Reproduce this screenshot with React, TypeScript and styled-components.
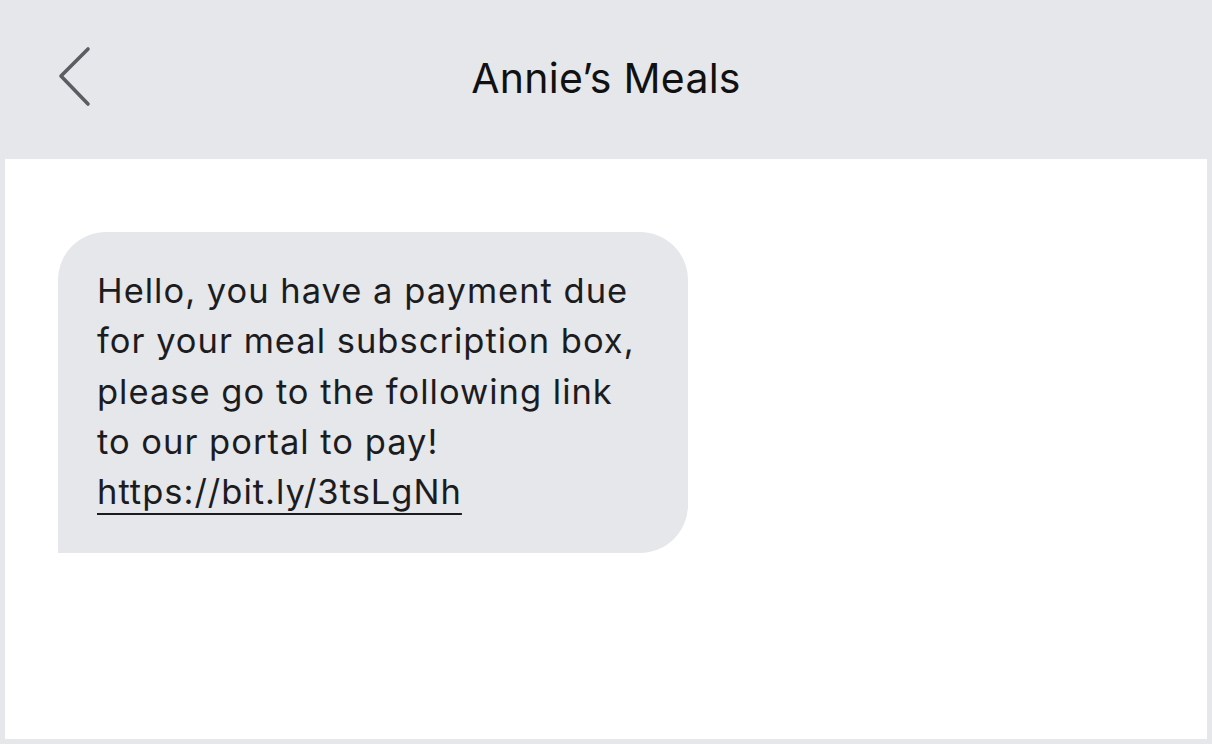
import React from "react";
import styled, { createGlobalStyle } from "styled-components";

const GlobalStyle = createGlobalStyle`
  html, body { margin: 0; padding: 0; }
  body { font-family: Inter, "Liberation Sans", Arial, sans-serif; background: #e5e7eb; }
`;

const Frame = styled.div`
  width: 1212px;
  height: 744px;
  background: #e5e7eb;
  display: flex;
  flex-direction: column;
  padding: 0 5px 5px;
  box-sizing: border-box;
`;

const Header = styled.header`
  height: 159px;
  flex-shrink: 0;
  margin: 0 -5px;
  position: relative;
  display: flex;
  align-items: center;
  justify-content: center;
`;

const BackButton = styled.button`
  position: absolute;
  left: 52px;
  top: 40px;
  width: 46px;
  height: 74px;
  border: 0;
  padding: 0;
  background: transparent;
  display: flex;
  align-items: center;
  justify-content: center;
  cursor: pointer;
`;

const Title = styled.h1`
  margin: 0;
  font-family: Inter, "Liberation Sans", Arial, sans-serif;
  font-size: 41px;
  font-weight: 400;
  letter-spacing: 0.25px;
  color: #111;
  transform: translateY(-2px);
`;

const Body = styled.main`
  flex: 1;
  background: #fff;
  padding: 73px 53px;
  display: flex;
  flex-direction: column;
  align-items: flex-start;
`;

const Bubble = styled.div`
  background: #e5e7eb;
  border-radius: 48px 48px 48px 0;
  padding: 34px 38px 36px 39px;
  width: 630px;
  box-sizing: border-box;
  font-family: Inter, "Liberation Sans", Arial, sans-serif;
  font-size: 34.5px;
  line-height: 50.3px;
  letter-spacing: 1px;
  color: #1c1c1e;
  white-space: nowrap;
`;

const Link = styled.a`
  color: inherit;
  text-decoration: underline;
  text-decoration-thickness: 2px;
  text-underline-offset: 9px;
`;

export default function App() {
  return (
    <>
      <GlobalStyle />
      <Frame>
        <Header>
          <BackButton aria-label="Back">
            <svg width="46" height="74" viewBox="0 0 46 74" fill="none">
              <path
                d="M36 9 L9 36 L36 64"
                stroke="#5a5e63"
                strokeWidth="3.6"
                strokeLinecap="round"
                strokeLinejoin="round"
              />
            </svg>
          </BackButton>
          <Title>Annie’s Meals</Title>
        </Header>
        <Body>
          <Bubble>
            Hello, you have a payment due
            <br />
            for your meal subscription box,
            <br />
            please go to the following link
            <br />
            to our portal to pay!
            <br />
            <Link href="#">https://bit.ly/3tsLgNh</Link>
          </Bubble>
        </Body>
      </Frame>
    </>
  );
}
